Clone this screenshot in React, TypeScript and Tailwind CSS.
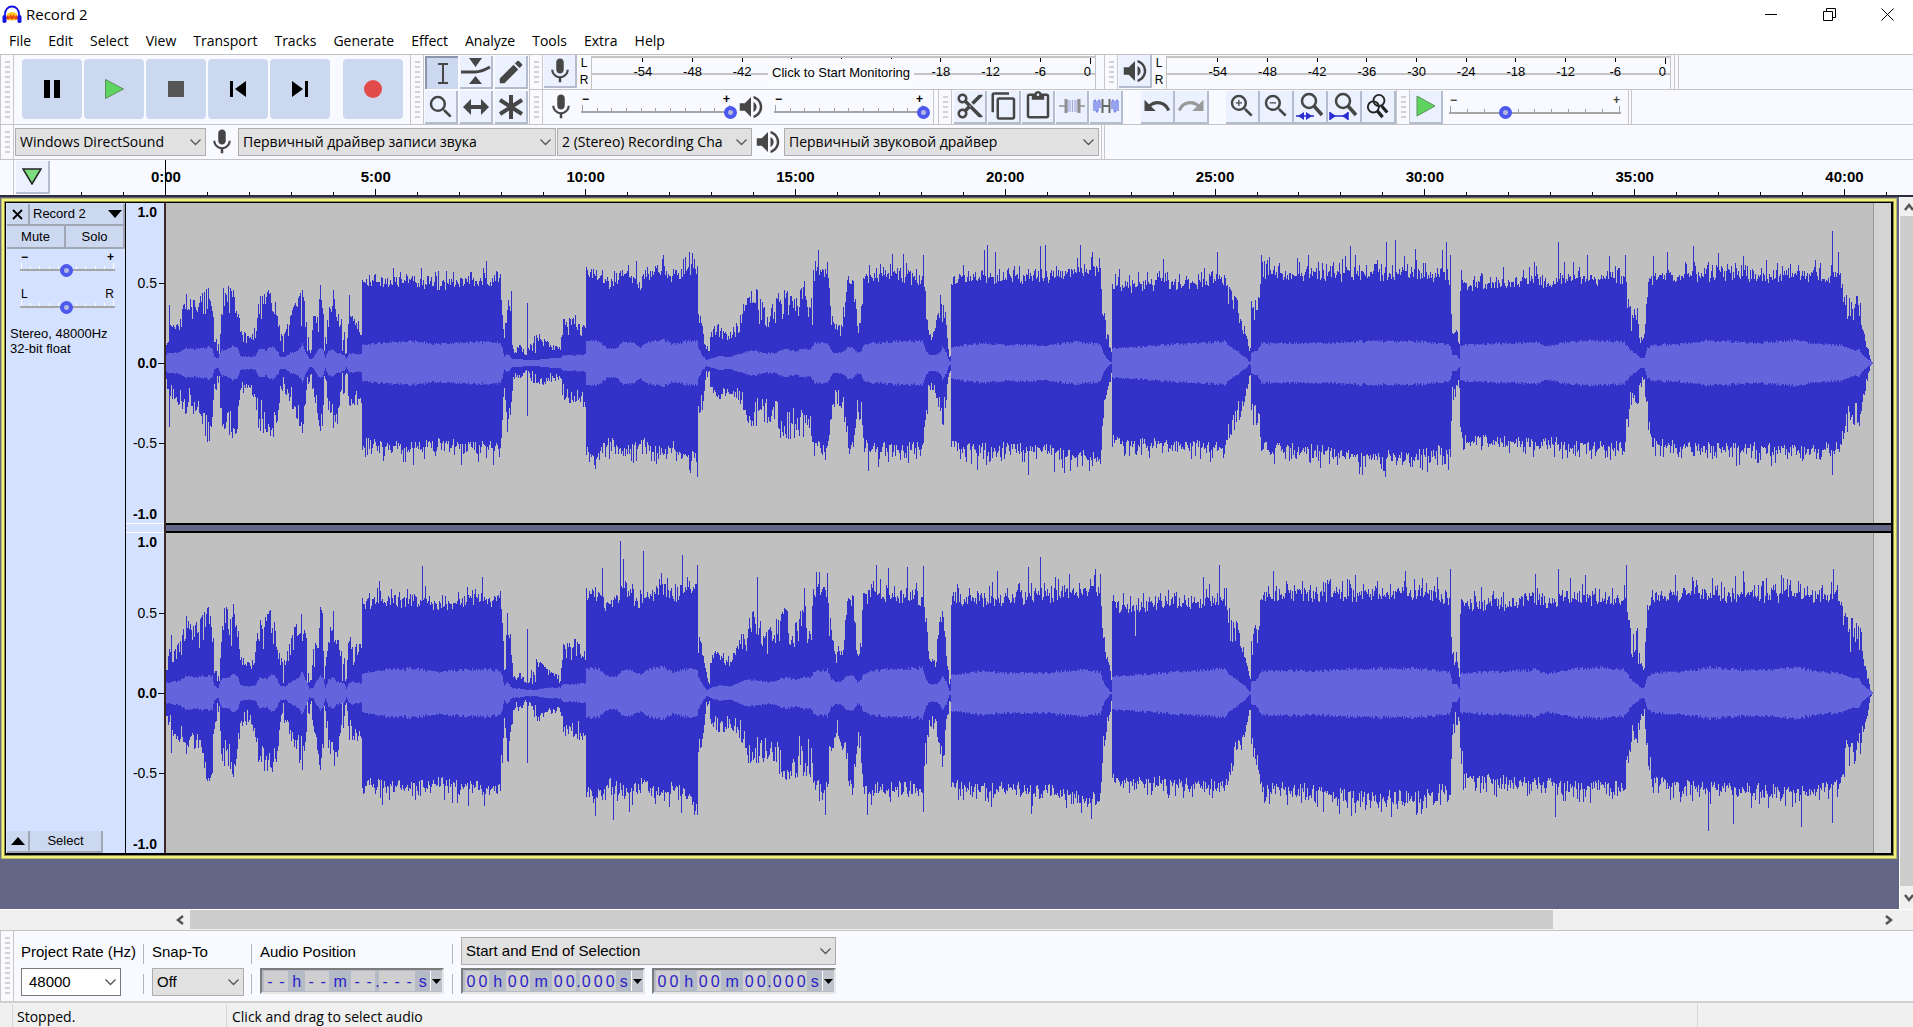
import type { ReactNode } from 'react';
import clsx from 'clsx';
import {
  MdContentCopy,
  MdContentCut,
  MdContentPaste,
  MdEdit,
  MdMic,
  MdRedo,
  MdSearch,
  MdUndo,
  MdVolumeUp,
  MdZoomIn,
  MdZoomOut,
} from 'react-icons/md';

const MENUS = ['File', 'Edit', 'Select', 'View', 'Transport', 'Tracks', 'Generate', 'Effect', 'Analyze', 'Tools', 'Extra', 'Help'];
const DB_MARKS = ['-54', '-48', '-42', '-36', '-30', '-24', '-18', '-12', '-6'];
const TIMES = ['0:00', '5:00', '10:00', '15:00', '20:00', '25:00', '30:00', '35:00', '40:00'];

// column, upper peak, lower peak, rms (160 = full scale)
const ENVELOPE: number[][] = [
  [0, 20, 22, 9], [3, 38, 30, 10], [8, 36, 38, 10], [14, 46, 42, 11], [20, 66, 52, 15], [28, 60, 48, 14],
  [33, 62, 50, 15], [37, 68, 70, 15], [42, 74, 76, 16], [46, 62, 70, 15], [48, 32, 32, 6], [52, 18, 20, 5],
  [54, 30, 45, 10], [56, 72, 60, 13], [62, 74, 68, 14], [67, 76, 72, 18], [71, 66, 65, 16], [74, 32, 30, 7],
  [84, 25, 25, 6], [89, 36, 38, 7], [93, 68, 70, 14], [100, 68, 66, 13], [106, 72, 72, 17], [111, 50, 66, 12],
  [114, 30, 25, 6], [119, 30, 30, 6], [124, 48, 40, 10], [130, 60, 52, 12], [136, 70, 68, 19], [140, 48, 36, 10],
  [143, 15, 18, 4], [147, 45, 28, 5], [151, 45, 50, 12], [154, 74, 70, 16], [157, 65, 55, 12], [159, 25, 20, 5],
  [162, 50, 50, 12], [167, 70, 62, 14], [170, 45, 66, 10], [174, 50, 35, 10], [178, 30, 30, 8], [180, 10, 10, 4],
  [183, 66, 42, 10], [186, 45, 40, 10], [190, 42, 42, 9], [195, 42, 38, 9], [196, 80, 80, 18], [220, 82, 84, 21],
  [250, 82, 84, 22], [268, 78, 80, 19], [300, 83, 84, 21], [325, 82, 84, 21], [334, 84, 84, 20], [336, 60, 60, 15],
  [338, 28, 28, 6], [341, 65, 68, 10], [344, 50, 50, 6], [347, 15, 15, 4], [354, 17, 15, 4], [360, 10, 8, 3],
  [370, 30, 26, 3], [376, 25, 22, 4], [386, 17, 18, 5], [394, 16, 16, 5], [397, 42, 38, 8], [409, 46, 38, 8],
  [418, 36, 42, 9], [419, 38, 42, 9], [420, 90, 90, 22], [432, 88, 92, 22], [440, 78, 80, 15], [450, 82, 82, 15],
  [458, 94, 90, 22], [468, 84, 86, 20], [474, 78, 78, 16], [484, 88, 86, 22], [498, 94, 90, 23], [506, 86, 84, 19],
  [520, 94, 92, 22], [531, 96, 96, 22], [532, 55, 50, 15], [536, 40, 45, 8], [540, 18, 10, 3], [546, 34, 30, 5],
  [554, 38, 35, 7], [564, 30, 31, 6], [572, 42, 36, 9], [576, 56, 44, 10], [582, 66, 60, 12], [590, 72, 60, 12],
  [599, 52, 58, 10], [609, 60, 58, 10], [614, 76, 72, 13], [621, 70, 74, 14], [629, 60, 74, 12], [638, 78, 70, 15],
  [644, 60, 72, 13], [648, 88, 80, 20], [654, 92, 84, 20], [661, 90, 84, 21], [665, 55, 55, 12], [669, 38, 38, 10],
  [674, 44, 42, 10], [679, 62, 60, 14], [682, 85, 80, 16], [687, 82, 80, 15], [691, 42, 48, 10], [695, 55, 60, 12],
  [697, 86, 80, 17], [704, 86, 86, 20], [734, 86, 84, 22], [750, 84, 86, 22], [756, 84, 86, 23], [760, 65, 62, 12],
  [763, 30, 28, 8], [769, 35, 32, 8], [773, 60, 45, 10], [776, 74, 74, 16], [780, 40, 35, 10], [783, 10, 10, 2],
  [784, 12, 10, 2], [785, 84, 84, 16], [815, 82, 86, 20], [840, 84, 86, 18], [880, 86, 86, 18], [910, 90, 92, 21],
  [935, 92, 96, 19], [937, 60, 60, 12], [941, 35, 34, 5], [945, 20, 20, 1], [946, 12, 10, 1], [947, 78, 78, 15],
  [970, 76, 80, 16], [995, 79, 80, 18], [1030, 80, 82, 20], [1060, 84, 84, 22], [1064, 72, 72, 17], [1072, 60, 60, 12],
  [1077, 44, 46, 8], [1081, 27, 30, 5], [1084, 15, 15, 1], [1085, 15, 15, 2], [1086, 62, 58, 10], [1092, 60, 62, 12],
  [1096, 88, 84, 20], [1150, 88, 88, 20], [1200, 88, 94, 22], [1250, 90, 94, 22], [1274, 86, 88, 20], [1285, 80, 90, 18],
  [1287, 35, 42, 8], [1291, 35, 30, 8], [1294, 18, 24, 4], [1295, 76, 62, 18], [1298, 78, 77, 18], [1320, 79, 78, 19],
  [1345, 80, 79, 20], [1370, 86, 82, 21], [1383, 77, 77, 17], [1400, 86, 84, 21], [1430, 84, 84, 23], [1459, 84, 84, 21],
  [1462, 76, 70, 17], [1466, 48, 44, 12], [1472, 56, 45, 8], [1475, 25, 25, 5], [1479, 28, 18, 5], [1482, 76, 60, 15],
  [1487, 84, 80, 18], [1515, 88, 84, 19], [1545, 88, 86, 23], [1590, 86, 86, 20], [1630, 88, 88, 23], [1655, 86, 86, 19],
  [1674, 86, 82, 18], [1678, 72, 74, 17], [1685, 64, 60, 14], [1694, 64, 60, 13], [1697, 46, 38, 8], [1702, 18, 20, 4],
  [1705, 4, 4, 2], [1707, 1, 1, 1],
];

// [column, height] of single peaks that rise over the envelope
const LEFT_UP = [
  [3, 58], [345, 72], [361, 60], [470, 102], [320, 102], [652, 113], [726, 109], [737, 109], [757, 108], [818, 113], [821, 118], [829, 111],
  [875, 117], [880, 118], [915, 118], [927, 111], [982, 91], [998, 104], [1052, 111], [1096, 108], [1132, 105], [1185, 117],
  [1221, 121], [1230, 123], [1250, 114], [1277, 113], [1281, 121], [1285, 108], [1393, 121], [1422, 108], [1444, 107],
  [1460, 108], [1488, 107], [1502, 111], [1528, 117], [1553, 110], [1578, 107], [1667, 132], [1673, 111],
];
const LEFT_DOWN = [
  [3, 64], [341, 69], [361, 53], [247, 102], [295, 102], [531, 114], [659, 97], [702, 108], [811, 107], [863, 112], [889, 109],
  [899, 110], [1218, 108], [1262, 109], [1667, 112],
];
const RIGHT_UP = [
  [5, 58], [213, 112], [256, 127], [316, 116], [436, 125], [454, 152], [457, 134], [477, 142], [516, 138], [531, 128], [341, 80],
  [361, 64], [591, 116], [650, 121], [661, 120], [710, 128], [722, 125], [741, 126], [757, 127], [831, 122], [863, 126], [875, 136],
  [929, 118], [1038, 116], [1054, 128], [1108, 122], [1190, 118], [1240, 122], [1285, 124], [1370, 119], [1393, 124],
  [1420, 118], [1461, 128], [1510, 118], [1578, 122], [1616, 118], [1668, 124],
];
const RIGHT_DOWN = [
  [5, 60], [216, 112], [302, 113], [361, 70], [447, 127], [515, 120], [531, 122], [659, 122], [701, 122], [757, 119],
  [866, 121], [926, 126], [1190, 120], [1252, 120], [1390, 124], [1543, 138], [1568, 131], [1636, 134], [1667, 130],
];

// narrow silences between phrases
const GAPS = [51, 53, 117, 141, 144, 145, 158, 176, 179, 180, 350, 358, 363, 366, 369, 542, 543];

const COLUMNS = 1708;

function makeRandom(seed: number) {
  let s = seed;
  return () => {
    s = (s * 1664525 + 1013904223) % 4294967296;
    return s / 4294967296;
  };
}

function buildWave(seed: number, gain: number, upSpikes: number[][], downSpikes: number[][]) {
  const rand = makeRandom(seed);
  const up: number[] = [];
  const down: number[] = [];
  const rms: number[] = [];
  let seg = 0;
  for (let x = 0; x < COLUMNS; x++) {
    while (seg < ENVELOPE.length - 2 && ENVELOPE[seg + 1][0] <= x) seg++;
    const a = ENVELOPE[seg];
    const b = ENVELOPE[seg + 1];
    const t = Math.min(1, (x - a[0]) / (b[0] - a[0]));
    const at = (i: number) => (a[i] + (b[i] - a[i]) * t) * gain;
    const shake = (v: number) => {
      const r = rand();
      if (GAPS.includes(x)) return 8 + 6 * r;
      if (v > 76 * gain) return v * (0.92 + 0.13 * rand() + 0.18 * r * r * r * r);
      return v * (1.05 - 0.4 * r * r - (rand() > 0.85 ? 0.15 : 0));
    };
    up.push(shake(at(1)));
    down.push(shake(at(2)));
    rms.push(at(3) * (0.92 + 0.14 * rand()));
  }
  upSpikes.forEach(([x, h]) => { up[x] = h; });
  downSpikes.forEach(([x, h]) => { down[x] = h; });
  return { peaks: outline(up, down), rms: outline(rms, rms) };
}

function outline(up: number[], down: number[]) {
  const top = up.map(h => `V${Math.round(160 - h)}h1`).join('');
  const bottom = [...down].reverse().map(h => `V${Math.round(160 + h)}h-1`).join('');
  return `M0 160${top}${bottom}Z`;
}

const LEFT = buildWave(7, 1, LEFT_UP, LEFT_DOWN);
const RIGHT = buildWave(23, 1.12, RIGHT_UP, RIGHT_DOWN);

function Logo() {
  return (
    <svg width="20" height="19" viewBox="0 0 20 19" aria-hidden="true">
      <path d="M4 14 L5 9 Q10 5 15 9 L16 14 Q10 17 4 14Z" fill="#ffc928" />
      <path d="M4 13 L6 10 L7 12 L9 9 L10 12 L12 9 L13 12 L15 10 L16 13 L14 15 L12 13 L10 15 L8 13 L6 15Z" fill="#f0420c" />
      <path d="M3 11 V9 A7 7.500 0 0 1 17 9 V11" fill="none" stroke="#1414e6" strokeWidth="1.800" />
      <rect x="0.500" y="10" width="4" height="8" rx="1.800" fill="#1414e6" />
      <rect x="15.500" y="10" width="4" height="8" rx="1.800" fill="#1414e6" />
    </svg>
  );
}

function Grabber() {
  return (
    <div className="flex w-[14px] shrink-0 justify-center self-stretch border-x border-[#c8c8c8] py-[5px]">
      <div className="w-[5px] bg-[repeating-linear-gradient(to_bottom,transparent_0px,transparent_1px,#d2d2d2_1px,#d2d2d2_3px,transparent_3px,transparent_5px)]" />
    </div>
  );
}

function ToolButton({ label, pressed, wide, children }: { label: string; pressed?: boolean; wide?: boolean; children: ReactNode }) {
  return (
    <button
      type="button"
      aria-label={label}
      className={clsx(
        'flex h-[33px] shrink-0 items-center justify-center text-[#464646]',
        wide ? 'w-[34px]' : 'w-[33px]',
        pressed
          ? 'border-l-2 border-t-2 border-[#8c95aa] bg-[#ccd8f0]'
          : 'border-b-2 border-r-2 border-[#b4bcd0] bg-[#ebf1ff]',
      )}
    >
      {children}
    </button>
  );
}

function TransportButton({ label, className, children }: { label: string; className?: string; children: ReactNode }) {
  return (
    <button type="button" aria-label={label} className={clsx('flex size-[60px] items-center justify-center rounded bg-[#ccd8f0]', className)}>
      <svg width="24" height="24" viewBox="0 0 24 24">{children}</svg>
    </button>
  );
}

function Meter({ monitor }: { monitor?: boolean }) {
  return (
    <div className="grid h-[34px] w-[504px] shrink-0 pt-px font-['Liberation_Sans',sans-serif] text-[13px]">
      <div className="col-start-1 row-start-1 flex flex-col">
        <div className="h-[17px] border-l border-t-2 border-[#c4c4c4]" />
        <div className="h-[16px] border-l border-t-2 border-[#c4c4c4]" />
      </div>
      <div className="col-start-1 row-start-1 flex pl-[27px] pt-[2px]">
        {DB_MARKS.map(db => (
          <div key={db} className="flex flex-1 flex-col items-center">
            <div className="h-1 w-px bg-black" />
            <span className="leading-[20px]">{monitor && ['-36', '-30', '-24'].includes(db) ? '' : db}</span>
          </div>
        ))}
        <div className="flex w-[30px] flex-col items-end pr-[4px]">
          <div className="h-[6px] w-px bg-black" />
          <span className="leading-[16px]">0</span>
        </div>
      </div>
      {monitor && (
        <button type="button" className="col-start-1 row-start-1 mr-1 h-7 self-center justify-self-center bg-[#fafbff] px-1">
          Click to Start Monitoring
        </button>
      )}
    </div>
  );
}

function ChannelLetters() {
  return (
    <div className="flex w-[14px] shrink-0 flex-col items-center font-['Liberation_Sans',sans-serif] text-xs leading-[17px]">
      <span>L</span>
      <span>R</span>
    </div>
  );
}

type SliderProps = { label: string; value: number; ticks: number; low?: string; high?: string; light?: boolean };

function Slider({ label, value, ticks, low = '−', high = '+', light }: SliderProps) {
  return (
    <div className="flex w-full flex-col font-['Liberation_Sans',sans-serif]">
      <div className={clsx('flex justify-between px-px text-xs leading-[11px]', low === '−' && 'font-bold')}>
        <span>{low}</span>
        <span>{high}</span>
      </div>
      <div className="grid grid-cols-1 items-center">
        <div className="col-start-1 row-start-1 flex h-[14px] flex-col">
          <div className="flex h-[6px] items-end justify-between px-px">
            {Array.from({ length: ticks }, (_, i) => (
              <span
                key={i}
                className={clsx('w-px', i === 0 || i === ticks - 1 ? 'h-[6px]' : 'h-[3px]', light ? 'bg-white' : 'bg-[#a0a0a0]')}
              />
            ))}
          </div>
          <div className="h-[2px] bg-[#a5a5a5]" />
        </div>
        <input
          type="range"
          aria-label={label}
          defaultValue={value}
          className="col-start-1 row-start-1 -ml-[6px] h-[14px] w-[calc(100%+12px)] appearance-none bg-transparent [&::-webkit-slider-thumb]:size-[13px] [&::-webkit-slider-thumb]:appearance-none [&::-webkit-slider-thumb]:rounded-full [&::-webkit-slider-thumb]:border-4 [&::-webkit-slider-thumb]:border-[#4c58ee] [&::-webkit-slider-thumb]:bg-[#b4b8e0]"
        />
      </div>
    </div>
  );
}

function Dropdown({ label, value, className, field }: { label: string; value: string; className: string; field?: string }) {
  return (
    <div className={clsx('grid grid-cols-1', className)}>
      <select
        aria-label={label}
        className={clsx(
          'col-start-1 row-start-1 h-7 w-full appearance-none truncate border pl-1 pr-7 text-black',
          field ?? 'border-[#adadad] bg-[#e1e1e1]',
        )}
      >
        <option>{value}</option>
      </select>
      <svg width="11" height="7" viewBox="0 0 11 7" className="pointer-events-none col-start-1 row-start-1 mr-[5px] self-center justify-self-end">
        <path d="M0.500 0.500 L5.500 5.500 L10.500 0.500" fill="none" stroke="#555" strokeWidth="1.300" />
      </svg>
    </div>
  );
}

function Digits({ text }: { text: string }) {
  return (
    <span className="flex bg-[#cfcfcf]">
      {text.split('').map((c, i) => (
        <span key={i} className="w-3 text-center">{c}</span>
      ))}
    </span>
  );
}

function TimeField({ label, blank }: { label: string; blank?: boolean }) {
  const two = blank ? '--' : '00';
  return (
    <div
      role="group"
      aria-label={label}
      className="flex h-[26px] w-[184px] items-stretch border-2 border-b-[#e8e8e8] border-l-[#7c7c7c] border-r-[#e8e8e8] border-t-[#7c7c7c] bg-[#b4bac6] py-px pl-[2px] text-base leading-[21px] text-[#2a1ec8]"
    >
      <Digits text={two} />
      <span className="w-[18px] text-center">h</span>
      <Digits text={two} />
      <span className="w-[23px] text-center">m</span>
      <Digits text={two} />
      <span className="w-[4px]">.</span>
      <Digits text={blank ? '---' : '000'} />
      <span className="w-[16px] text-center">s</span>
      <button type="button" aria-label={`${label} format`} className="flex w-[12px] items-center justify-center border-l border-white bg-[#c0c4cc]">
        <svg width="9" height="5" viewBox="0 0 9 5"><path d="M0 0h9L4.500 5z" /></svg>
      </button>
    </div>
  );
}

function TitleBar() {
  return (
    <header className="flex h-7 items-center bg-white pl-[2px]">
      <Logo />
      <h1 className="pl-1 text-[15px]">Record 2</h1>
      <div className="ml-auto flex gap-[10px] pr-[2px]">
        <button type="button" aria-label="Minimize" className="flex w-12 justify-center">
          <svg width="13" height="13" viewBox="0 0 13 13"><path d="M0 6.500h12" stroke="#000" /></svg>
        </button>
        <button type="button" aria-label="Restore" className="flex w-12 justify-center">
          <svg width="13" height="13" viewBox="0 0 13 13" fill="none" stroke="#000">
            <path d="M0.500 3.500h9v9h-9zM3.500 3.500v-3h9v9h-3" />
          </svg>
        </button>
        <button type="button" aria-label="Close" className="flex w-12 justify-center">
          <svg width="13" height="13" viewBox="0 0 13 13"><path d="M0.500 0.500l12 12M12.500 0.500l-12 12" stroke="#000" /></svg>
        </button>
      </div>
    </header>
  );
}

function TransportBar() {
  return (
    <div className="flex shrink-0 items-start">
      <Grabber />
      <div className="flex gap-[2px] pl-2 pr-[7px] pt-1">
        <TransportButton label="Pause"><path d="M4 3h6v18H4zM14 3h6v18h-6z" /></TransportButton>
        <TransportButton label="Play"><path d="M3.500 2.500v19l18-9.500z" fill="#5fd35f" stroke="#5d8f5d" /></TransportButton>
        <TransportButton label="Stop"><path d="M4 4h16v16H4z" fill="#555" /></TransportButton>
        <TransportButton label="Skip to start"><path d="M4 4h3v16H4zM20 4v16L9 12z" /></TransportButton>
        <TransportButton label="Skip to end"><path d="M17 4h3v16h-3zM4 4v16l11-8z" /></TransportButton>
        <TransportButton label="Record" className="ml-[11px]"><circle cx="12" cy="12" r="9" fill="#e34a4a" /></TransportButton>
      </div>
    </div>
  );
}

function ToolsBar() {
  return (
    <div className="flex shrink-0 items-start">
      <Grabber />
      <div className="grid grid-cols-3 gap-x-[2px] gap-y-[2px] px-px pt-px">
        <ToolButton label="Selection tool" pressed>
          <svg width="12" height="23" viewBox="0 0 12 23" fill="none" stroke="#464646" strokeWidth="2">
            <path d="M1 2h10M1 21h10M6 2v19" />
          </svg>
        </ToolButton>
        <ToolButton label="Envelope tool">
          <svg width="31" height="27" viewBox="0 0 31 27" fill="#464646">
            <path d="M9 0h13l-6.500 9zM9 26h13l-6.500-8z" />
            <path d="M1 14h14q6 0 15-5" fill="none" stroke="#464646" strokeWidth="3" />
          </svg>
        </ToolButton>
        <ToolButton label="Draw tool"><MdEdit size={30} /></ToolButton>
        <ToolButton label="Zoom tool"><MdSearch size={30} /></ToolButton>
        <ToolButton label="Time shift tool">
          <svg width="26" height="16" viewBox="0 0 26 16" fill="#464646">
            <path d="M0 8l8-8v6h10V0l8 8-8 8v-6H8v6z" />
          </svg>
        </ToolButton>
        <ToolButton label="Multi tool">
          <svg width="26" height="26" viewBox="0 0 26 26" stroke="#464646" strokeWidth="4">
            <path d="M13 1v24M2 6l22 14M24 6L2 20" />
          </svg>
        </ToolButton>
      </div>
    </div>
  );
}

function EditBar() {
  return (
    <div className="flex items-center">
      <Grabber />
      <div className="flex gap-px pl-[2px]">
        <ToolButton label="Cut"><MdContentCut size={30} /></ToolButton>
        <ToolButton label="Copy"><MdContentCopy size={30} /></ToolButton>
        <ToolButton label="Paste"><MdContentPaste size={30} /></ToolButton>
        <ToolButton label="Trim">
          <svg width="26" height="18" viewBox="0 0 26 18" fill="none">
            <path d="M0 9h6M20 9h6" stroke="#a9a9a9" strokeWidth="2" />
            <path d="M9 15V3M11 15V3M13.500 15V3M16 15V3M18 15V3" stroke="#a4abdc" strokeWidth="1.200" />
            <path d="M7 2v14M20 2v14" stroke="#8f8f8f" strokeWidth="3" />
          </svg>
        </ToolButton>
        <ToolButton label="Silence">
          <svg width="26" height="18" viewBox="0 0 26 18" fill="none">
            <path d="M1 14V5q1-4 2 0v8q1 4 2 0V5q1-4 2 0v6M19 12V5q1-4 2 0v8q1 4 2 0V5q1-4 2 0v9" stroke="#7d88ea" strokeWidth="1.500" />
            <path d="M9.500 2v14M16.500 2v14M10 9h6" stroke="#666" strokeWidth="2" />
          </svg>
        </ToolButton>
      </div>
      <div className="flex pl-[18px]">
        <ToolButton label="Undo" wide><MdUndo size={30} /></ToolButton>
        <ToolButton label="Redo" wide><MdRedo size={30} color="#999" /></ToolButton>
      </div>
      <div className="flex pl-[17px]">
        <ToolButton label="Zoom in" wide><MdZoomIn size={30} /></ToolButton>
        <ToolButton label="Zoom out" wide><MdZoomOut size={30} /></ToolButton>
        <ToolButton label="Zoom to selection" wide>
          <svg width="30" height="30" viewBox="0 0 30 30" fill="none" stroke="#464646">
            <circle cx="14" cy="10" r="7" strokeWidth="2.500" />
            <path d="M19 15l8 9" strokeWidth="3.500" />
            <path d="M1 25h18" stroke="#2b2bd0" strokeWidth="1.500" />
            <path d="M9 21v8l-6-4zM11 21v8l6-4z" fill="#2b2bd0" stroke="none" />
          </svg>
        </ToolButton>
        <ToolButton label="Fit to width" wide>
          <svg width="30" height="30" viewBox="0 0 30 30" fill="none" stroke="#464646">
            <circle cx="14" cy="10" r="7" strokeWidth="2.500" />
            <path d="M19 15l8 9" strokeWidth="3.500" />
            <path d="M1 25h18M1 21v8M19 21v8" stroke="#2b2bd0" strokeWidth="1.500" />
            <path d="M1 21v8l6-4zM19 21v8l-6-4z" fill="#2b2bd0" stroke="none" />
          </svg>
        </ToolButton>
        <ToolButton label="Zoom toggle" wide>
          <svg width="24" height="26" viewBox="0 0 26 28" fill="none" stroke="#222" strokeWidth="2">
            <circle cx="14" cy="8" r="6" />
            <circle cx="8" cy="15" r="6" />
            <path d="M17 14l6 7M12 19l6 7" strokeWidth="3.500" />
          </svg>
        </ToolButton>
      </div>
      <Grabber />
      <div className="flex items-start">
        <ToolButton label="Play at speed">
          <svg width="20" height="22" viewBox="0 0 20 22"><path d="M1 1v20l18-10z" fill="#5fd35f" stroke="#5d8f5d" /></svg>
        </ToolButton>
        <div className="w-[184px] pl-[6px] pr-[6px] pt-1"><Slider label="Playback speed" value={33} ticks={11} /></div>
      </div>
      <div className="ml-px w-[4px] self-stretch border-x border-[#c8c8c8]" />
    </div>
  );
}

function Toolbars() {
  return (
    <div className="flex h-[70px] overflow-hidden border-t border-[#c4c4c4]">
      <TransportBar />
      <ToolsBar />
      <div className="flex min-w-0 flex-1 flex-col">
        <div className="flex h-[34px]">
          <Grabber />
          <div className="flex pl-px">
            <ToolButton label="Recording meter"><MdMic size={30} /></ToolButton>
            <ChannelLetters />
          </div>
          <Meter monitor />
          <div className="mr-2 w-px bg-[#c4c4c4]" />
          <Grabber />
          <div className="flex pl-px">
            <ToolButton label="Playback meter"><MdVolumeUp size={30} /></ToolButton>
            <ChannelLetters />
          </div>
          <Meter />
          <div className="w-px bg-[#c4c4c4]" />
          <div className="ml-[3px] w-[5px] border-x border-[#c8c8c8]" />
        </div>
        <div className="flex h-[35px] border-t border-[#c4c4c4] text-[#464646]">
          <Grabber />
          <MdMic size={30} className="ml-[3px] mt-[2px] shrink-0" />
          <div className="ml-[5px] w-[150px] shrink-0 pt-[4px] text-black"><Slider label="Recording volume" value={100} ticks={11} /></div>
          <MdVolumeUp size={30} className="ml-[5px] mt-[2px] shrink-0" />
          <div className="ml-[8px] w-[150px] shrink-0 pt-[4px] text-black"><Slider label="Playback volume" value={100} ticks={11} /></div>
          <div className="ml-[9px] w-[5px] shrink-0 border-l border-[#c8c8c8]" />
          <EditBar />
        </div>
      </div>
    </div>
  );
}

function DeviceBar() {
  return (
    <div className="flex h-[35px] items-center border-t border-[#c4c4c4] text-sm text-[#464646]">
      <Grabber />
      <Dropdown label="Audio host" value="Windows DirectSound" className="ml-px w-[191px]" />
      <MdMic size={30} className="mx-px" />
      <Dropdown label="Recording device" value="Первичный драйвер записи звука" className="w-[318px]" />
      <Dropdown label="Recording channels" value="2 (Stereo) Recording Channels" className="ml-px w-[195px] [&>select]:text-clip" />
      <MdVolumeUp size={30} className="mx-px" />
      <Dropdown label="Playback device" value="Первичный звуковой драйвер" className="w-[315px]" />
      <div className="ml-[2px] w-[4px] self-stretch border-x border-[#c8c8c8]" />
    </div>
  );
}

function Timeline() {
  return (
    <div className="flex h-9 overflow-hidden border-t border-[#c4c4c4] font-['Liberation_Sans',sans-serif]">
      <div className="w-[14px] shrink-0 border-r border-[#c8c8c8]" />
      <div className="w-[47px] shrink-0 pl-[2px] pt-px">
        <ToolButton label="Pinned play head" wide>
          <svg width="20" height="17" viewBox="0 0 20 17"><path d="M1 1h18l-9 15z" fill="#7ddc7d" stroke="#222" strokeWidth="1.500" /></svg>
        </ToolButton>
      </div>
      <div className="flex min-w-0 flex-1">
        {TIMES.map(time => (
          <div key={time} className="flex w-[11.33%] shrink-0 flex-col justify-between">
            <span className="pt-2 text-center text-[15px] font-bold leading-[18px]">{time}</span>
            <div className="grid grid-cols-5 items-end justify-items-center">
              <i className="h-[3px] w-px bg-black" />
              <i className="h-[3px] w-px bg-black" />
              <i className={clsx('w-px bg-black', time === '0:00' ? '-mt-[32px] h-[38px]' : 'h-[6px]')} />
              <i className="h-[3px] w-px bg-black" />
              <i className="h-[3px] w-px bg-black" />
            </div>
          </div>
        ))}
      </div>
    </div>
  );
}

const panelButton = 'flex items-center border-b-2 border-r-2 border-[#a0a6b4] bg-[#ccd8f0]';

function TrackPanel() {
  return (
    <div className="flex w-[120px] shrink-0 flex-col border-r border-black bg-[#d5e2ff] pt-px text-[13px]">
      <div className="flex h-[22px] pl-px">
        <button type="button" aria-label="Close track" className={clsx(panelButton, 'w-[23px] justify-center')}>
          <svg width="11" height="11" viewBox="0 0 11 11"><path d="M1 1l9 9M10 1l-9 9" stroke="#000" strokeWidth="1.800" /></svg>
        </button>
        <button type="button" className={clsx(panelButton, 'flex-1 justify-between pl-[3px] pr-px')}>
          Record 2
          <svg width="14" height="8" viewBox="0 0 14 8"><path d="M0 0h14L7 8z" /></svg>
        </button>
      </div>
      <div className="flex h-[23px] pl-px">
        <button type="button" className={clsx(panelButton, 'flex-1 justify-center')}>Mute</button>
        <button type="button" className={clsx(panelButton, 'flex-1 justify-center')}>Solo</button>
      </div>
      <div className="flex flex-col gap-[12px] pl-[14px] pr-[10px] pt-[3px]">
        <Slider label="Gain" value={49} ticks={11} light />
        <Slider label="Pan" value={49} ticks={11} low="L" high="R" light />
      </div>
      <p className="pl-1 pt-[12px] leading-[15px]">Stereo, 48000Hz<br />32-bit float</p>
      <div className="mt-auto flex h-[22px] w-[97px] pl-px">
        <button type="button" aria-label="Collapse track" className={clsx(panelButton, 'w-[23px] justify-center')}>
          <svg width="14" height="8" viewBox="0 0 14 8"><path d="M0 8h14L7 0z" /></svg>
        </button>
        <button type="button" className={clsx(panelButton, 'flex-1 justify-center')}>Select</button>
      </div>
    </div>
  );
}

function LevelScale() {
  return (
    <div className="flex h-80 flex-col bg-[#d5e2ff] text-sm leading-[18px]">
      <span className="flex h-10 items-start justify-end pr-[7px] font-bold">1.0</span>
      <span className="flex h-20 items-center justify-end gap-[2px]">0.5<i className="h-px w-[5px] bg-black" /></span>
      <span className="flex h-20 items-center justify-end gap-px font-bold">0.0<i className="h-px w-[6px] bg-black" /></span>
      <span className="flex h-20 items-center justify-end gap-[2px]">-0.5<i className="h-px w-[5px] bg-black" /></span>
      <span className="flex h-10 items-end justify-end pr-[7px] font-bold">-1.0</span>
    </div>
  );
}

function Channel({ wave, label }: { wave: { peaks: string; rms: string }; label: string }) {
  return (
    <div className="flex h-80">
      <svg
        role="img"
        aria-label={label}
        viewBox={`0 0 ${COLUMNS} 320`}
        preserveAspectRatio="none"
        className="h-80 min-w-0 flex-1 bg-[#c0c0c0]"
        shapeRendering="crispEdges"
      >
        <path d={wave.peaks} fill="#3232c8" />
        <path d={wave.rms} fill="#6464dc" />
      </svg>
      <div className="w-[18px] border-l border-[#969696] bg-[#d4d4d4]" />
    </div>
  );
}

function TrackArea() {
  return (
    <main className="flex flex-1 border-t-2 border-[#2c2c3e] bg-[#646685] font-['Liberation_Sans',sans-serif]">
      <div className="min-w-0 flex-1 pl-px pr-[2px] pt-px">
        <div className="border border-[#b9b96e]">
          <div className="border-2 border-[#f2f27c]">
            <div className="border border-[#8c8c46]">
              <div className="flex border-b-2 border-l border-r-2 border-t border-black">
                <TrackPanel />
                <div className="w-[40px] shrink-0 border-r-2 border-[#3c2626]">
                  <LevelScale />
                  <div className="h-[10px] border-y border-white bg-[#d5e2ff]" />
                  <LevelScale />
                </div>
                <div className="min-w-0 flex-1">
                  <Channel wave={LEFT} label="Left channel" />
                  <div className="h-[10px] border-y-2 border-black bg-[#646685]" />
                  <Channel wave={RIGHT} label="Right channel" />
                </div>
              </div>
            </div>
          </div>
        </div>
      </div>
      <div className="flex w-[14px] flex-col overflow-hidden border-l border-white bg-[#f0f0f0]">
        <button type="button" aria-label="Scroll up" className="flex h-[19px] items-center pl-1">
          <svg width="9" height="8" viewBox="0 0 9 8"><path d="M1 7l4-5 4 5" fill="none" stroke="#555" strokeWidth="2.500" /></svg>
        </button>
        <div className="flex-1 bg-[#cdcdcd]" />
        <button type="button" aria-label="Scroll down" className="flex h-[23px] items-center pl-1">
          <svg width="9" height="8" viewBox="0 0 9 8"><path d="M1 1l4 5 4-5" fill="none" stroke="#555" strokeWidth="2.500" /></svg>
        </button>
      </div>
    </main>
  );
}

function HorizontalScroll() {
  return (
    <div className="flex h-[21px] border-t border-white bg-[#f0f0f0] pl-[170px] pr-[14px]">
      <button type="button" aria-label="Scroll left" className="flex w-5 items-center justify-center">
        <svg width="8" height="10" viewBox="0 0 8 10"><path d="M7 1L2 5l5 4" fill="none" stroke="#555" strokeWidth="2.500" /></svg>
      </button>
      <div className="flex flex-1 pb-px">
        <div className="w-[80.700%] bg-[#cdcdcd]" />
      </div>
      <button type="button" aria-label="Scroll right" className="flex w-5 items-center justify-center">
        <svg width="8" height="10" viewBox="0 0 8 10"><path d="M1 1l5 4-5 4" fill="none" stroke="#555" strokeWidth="2.500" /></svg>
      </button>
    </div>
  );
}

function Divider() {
  return (
    <div className="flex w-px flex-col gap-[10px] self-center">
      <i className="h-5 w-px bg-[#b4b4b4]" />
      <i className="h-5 w-px bg-[#b4b4b4]" />
    </div>
  );
}

function SelectionBar() {
  return (
    <div className="flex h-[71px] border-t border-[#c4c4c4] font-['Liberation_Sans',sans-serif] text-[15px]">
      <Grabber />
      <div className="flex pl-[7px] pt-[6px]">
        <div className="w-[122px]">
          <label htmlFor="rate" className="block h-[31px] leading-[30px]">Project Rate (Hz)</label>
          <div className="grid w-[100px] grid-cols-1">
            <input id="rate" defaultValue="48000" className="col-start-1 row-start-1 h-7 w-full border border-[#7a7a7a] bg-white px-[7px] pb-px" />
            <svg width="11" height="7" viewBox="0 0 11 7" className="col-start-1 row-start-1 mr-[5px] self-center justify-self-end">
              <path d="M0.500 0.500 L5.500 5.500 L10.500 0.500" fill="none" stroke="#555" strokeWidth="1.300" />
            </svg>
          </div>
        </div>
        <Divider />
        <div className="w-[107px] pl-2">
          <span className="block h-[31px] leading-[30px]">Snap-To</span>
          <Dropdown label="Snap-To" value="Off" className="w-[92px]" />
        </div>
        <Divider />
        <div className="w-[200px] pl-2">
          <span className="block h-[31px] leading-[30px]">Audio Position</span>
          <TimeField label="Audio Position" blank />
        </div>
        <Divider />
        <div className="w-[383px] pl-2">
          <div className="h-[31px]">
            <Dropdown label="Selection mode" value="Start and End of Selection" className="w-full" />
          </div>
          <div className="flex justify-between">
            <TimeField label="Selection start" />
            <TimeField label="Selection end" />
          </div>
        </div>
      </div>
    </div>
  );
}

function StatusBar() {
  return (
    <footer className="flex h-[26px] border-t-2 border-[#cfcfcf] bg-[#f0f0f0] pl-3 pt-px text-sm leading-[26px]">
      <div className="w-[214px] border-l border-[#d7d7d7] pl-1">Stopped.</div>
      <div className="flex-1 border-l border-[#d7d7d7] pl-[5px]">Click and drag to select audio</div>
      <div className="w-[216px] border-l border-[#d7d7d7]" />
    </footer>
  );
}

export default function App() {
  return (
    <div className="flex min-h-screen flex-col overflow-hidden bg-[#f8faff] font-['Open_Sans','Noto_Sans',sans-serif] text-black">
      <TitleBar />
      <nav className="flex h-[26px] gap-[17px] bg-white pl-[9px] text-sm leading-[26px]">
        {MENUS.map(menu => (
          <button key={menu} type="button">{menu}</button>
        ))}
      </nav>
      <Toolbars />
      <DeviceBar />
      <Timeline />
      <TrackArea />
      <HorizontalScroll />
      <SelectionBar />
      <StatusBar />
    </div>
  );
}
